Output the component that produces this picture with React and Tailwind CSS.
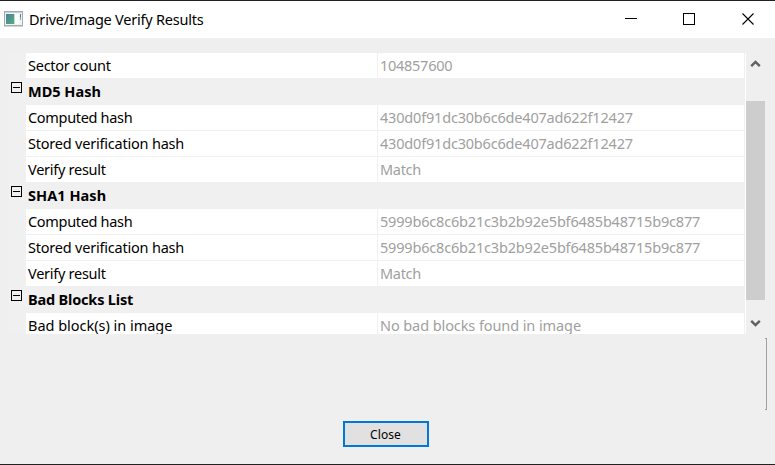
const md5 = '430d0f91dc30b6c6de407ad622f12427';
const sha1 = '5999b6c8c6b21c3b2b92e5bf6485b48715b9c877';

const rows = [
  { label: 'Sector count', value: '104857600', lt: 'tracking-[-0.25px]', vt: 'tracking-[-0.27px]' },
  { group: 'MD5 Hash', lt: 'tracking-[0px]' },
  { label: 'Computed hash', value: md5, lt: 'tracking-[-0.32px]', vt: 'tracking-[-0.19px]' },
  { label: 'Stored verification hash', value: md5, lt: 'tracking-[-0.21px]', vt: 'tracking-[-0.19px]' },
  { label: 'Verify result', value: 'Match', lt: 'tracking-[-0.27px]', vt: 'tracking-[-0.3px]' },
  { group: 'SHA1 Hash', lt: 'tracking-[0.05px]' },
  { label: 'Computed hash', value: sha1, lt: 'tracking-[-0.32px]', vt: 'tracking-[-0.18px]' },
  { label: 'Stored verification hash', value: sha1, lt: 'tracking-[-0.21px]', vt: 'tracking-[-0.18px]' },
  { label: 'Verify result', value: 'Match', lt: 'tracking-[-0.27px]', vt: 'tracking-[-0.3px]' },
  { group: 'Bad Blocks List', lt: 'tracking-[-0.18px]' },
  { label: 'Bad block(s) in image', value: 'No bad blocks found in image', lt: 'tracking-[-0.02px]', vt: 'tracking-[-0.09px]' },
];

function AppIcon() {
  return (
    <svg width="20" height="16" viewBox="0 0 20 16" shapeRendering="crispEdges">
      <defs>
        <linearGradient id="pane" x1="0" y1="0" x2="1" y2="1">
          <stop offset="0" stopColor="#4a7fa8" />
          <stop offset="1" stopColor="#55b070" />
        </linearGradient>
      </defs>
      <rect x="0.5" y="0.5" width="18" height="14" fill="#f1f4f4" stroke="#a5abb0" />
      <rect x="1" y="1" width="17" height="1" fill="#c9ced2" />
      <rect x="2" y="3" width="8" height="10" fill="url(#pane)" />
      <rect x="10" y="3" width="1" height="10" fill="#c9d8d8" />
      <rect x="11" y="3" width="4" height="10" fill="#fff" />
      <rect x="16" y="3" width="1" height="3" fill="#4678bd" />
      <rect x="16" y="6" width="1" height="3" fill="#70b995" />
      <rect x="0" y="15" width="19" height="1" fill="#d5d5d5" />
    </svg>
  );
}

function TitleBar() {
  return (
    <header className="flex h-[37px] shrink-0 bg-white pl-1">
      <div className="pt-[10px]"><AppIcon /></div>
      <h1 className="ml-[5px] grow pt-[6px] leading-6 tracking-[-0.22px] whitespace-nowrap">Drive/Image Verify Results</h1>
      <svg className="mr-[20px] mt-3" width="131" height="12" viewBox="0 0 131 12" fill="none" stroke="#000">
        <path d="M1 5.5h12M59.5 .5h11v11h-11z" shapeRendering="crispEdges" />
        <path d="M118.5 .5l11 11M129.5 .5l-11 11" strokeWidth="1.1" />
      </svg>
    </header>
  );
}

function Row({ row }) {
  return (
    <div className="flex h-[26px] shrink-0">
      <div className="w-[18px] shrink-0 pl-[3px] pt-[3px]">
        {row.group && (
          <svg width="11" height="11" viewBox="0 0 11 11" fill="none" stroke="#000" shapeRendering="crispEdges">
            <path d="M.5 .5h10v10H.5zM2 5.5h7" />
          </svg>
        )}
      </div>
      {row.group ? (
        <div className={`pl-[2px] leading-6 font-bold whitespace-nowrap ${row.lt}`}>{row.group}</div>
      ) : (
        <>
          <div className={`h-[25px] w-[351px] shrink-0 bg-white pl-[2px] leading-[25px] whitespace-nowrap ${row.lt}`}>{row.label}</div>
          <div className={`ml-px h-[25px] w-[366px] shrink-0 bg-white pl-[2px] leading-[25px] whitespace-nowrap text-[#a0a0a0] ${row.vt}`}>{row.value}</div>
        </>
      )}
    </div>
  );
}

function ScrollBar() {
  return (
    <div className="flex w-[20px] shrink-0 flex-col border-l border-white">
      <svg width="19" height="48" viewBox="0 0 19 48" fill="none" stroke="#606060" strokeWidth="2.4">
        <path d="M5.2 13.2L9.5 8.9l4.3 4.3" />
      </svg>
      <div className="h-[199px] bg-[#cdcdcd]" />
      <svg width="19" height="34" viewBox="0 0 19 34" fill="none" stroke="#606060" strokeWidth="2.4">
        <path d="M5.2 20.8L9.5 25.1l4.3-4.3" />
      </svg>
    </div>
  );
}

export default function App() {
  return (
    <div className="flex h-[465px] w-[775px] flex-col overflow-hidden border-y border-[#232124] bg-[#efefef] font-['Noto_Sans','Open_Sans',sans-serif] text-[14.5px] text-black">
      <TitleBar />
      <main className="flex flex-col pt-[15px] pl-2">
        <div className="flex h-[281px]">
          <div className="flex w-[737px] shrink-0 flex-col overflow-hidden bg-[#f0f0f0]">
            {rows.map((row, i) => <Row key={i} row={row} />)}
          </div>
          <ScrollBar />
        </div>
        <div className="mt-1 ml-[757px] h-[72px] w-[2px] border-y border-r border-[#a0a0a0]" />
        <button className="mt-[11px] ml-[335px] h-[26px] w-[86px] border-2 border-[#0078d7] bg-[#e1e1e1] pt-px pr-px text-[12px] leading-[21px] tracking-[0.1px]">Close</button>
      </main>
    </div>
  );
}
